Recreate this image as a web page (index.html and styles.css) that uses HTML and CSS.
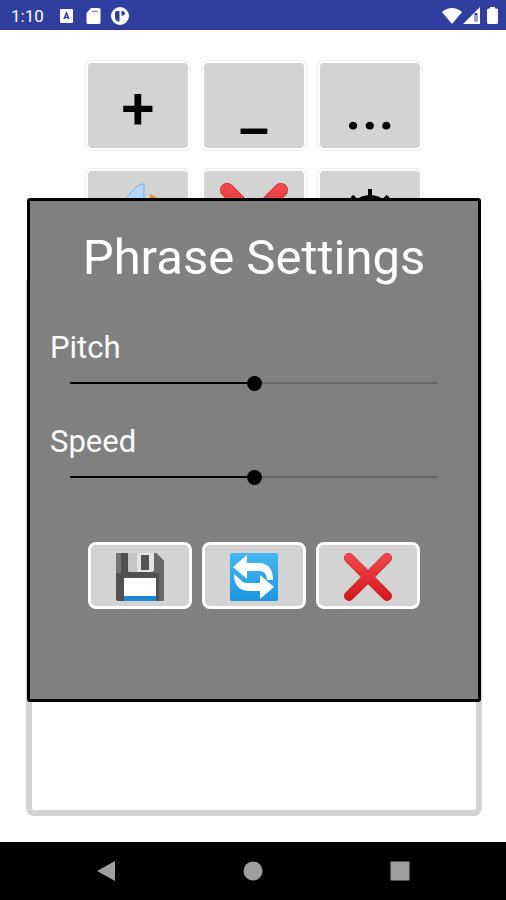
FILE: index.html
```
<!DOCTYPE html>
<html lang="en">

<head>
  <meta charset="UTF-8">
  <meta name="viewport" content="width=device-width, initial-scale=1.0">
  <title>Phrase Settings</title>
  <link rel="stylesheet" href="styles.css">
</head>

<body>
  <!-- shared symbols -->
  <svg class="defs" width="0" height="0">
    <linearGradient id="red" x1="0" y1="0" x2="0" y2="48" gradientUnits="userSpaceOnUse">
      <stop offset="0" stop-color="#f44b4f" />
      <stop offset="1" stop-color="#d3141c" />
    </linearGradient>
    <symbol id="cross" viewBox="0 0 48 48">
      <path d="M5 5L43 43M43 5L5 43" fill="none" stroke="#c4262b" stroke-width="10" stroke-linecap="round" />
      <path d="M5 5L43 43M43 5L5 43" fill="none" stroke="url(#red)" stroke-width="9" stroke-linecap="round" />
    </symbol>
  </svg>

  <header class="status-bar">
    <span class="clock">1:10</span>
    <svg class="icon-a" width="13" height="14" viewBox="0 0 13 14">
      <rect width="13" height="14" rx="1" fill="#fff" />
      <path d="M4 10L6.500 4L9 10M5 8.500H8" fill="none" stroke="#303f9f" stroke-width="1.500" />
    </svg>
    <svg class="icon-sd" width="15" height="16" viewBox="0 0 15 16">
      <path d="M5 0H13Q14.500 0 14.500 1.500V14.500Q14.500 16 13 16H2Q.500 16 .500 14.500V5Z" fill="#fff" />
      <path d="M6 3.500H12" stroke="#8d96cc" stroke-width="1.500" />
    </svg>
    <svg class="icon-p" width="18" height="18" viewBox="0 0 18 18">
      <circle cx="9" cy="9" r="9" fill="#fff" />
      <path d="M4 6Q4 4 6 4H8.500V14.500H7Q4 13.500 4 10ZM10.500 4H12Q14 4.500 14 6.500Q14 8.500 12 8.500H10.500Z" fill="#303f9f" />
    </svg>
    <svg class="icon-wifi" width="20" height="16" viewBox="0 0 20 16">
      <path d="M0 4Q10-4 20 4L10 16Z" fill="#fff" />
    </svg>
    <svg class="icon-signal" width="17" height="17" viewBox="0 0 17 17">
      <path d="M17 0V17H0Z" fill="#fff" />
      <path d="M13 6V14.500" stroke="#303f9f" stroke-width="3" />
      <path d="M13 8V14" stroke="#fff" stroke-width="1" />
    </svg>
    <svg class="icon-battery" width="11" height="17" viewBox="0 0 11 17">
      <path d="M3 0H8V1.500H9.500Q11 1.500 11 3V15.500Q11 17 9.500 17H1.500Q0 17 0 15.500V3Q0 1.500 1.500 1.500H3Z" fill="#fff" />
    </svg>
  </header>

  <main class="board">
    <div class="keys">
      <button class="key">+</button>
      <button class="key">_</button>
      <button class="key">...</button>
      <button class="key" aria-label="Edit">
        <svg width="68" height="68" viewBox="0 0 68 68">
          <path d="M40 1V34H6L21 16L32 4Q36 0 40 1Z" fill="#b3d7f7" stroke="#7fb2e4" />
          <path d="M46 11L54 15L66 34H46Z" fill="#e0962b" />
        </svg>
      </button>
      <button class="key" aria-label="Delete">
        <svg width="68" height="68"><use href="#cross" /></svg>
      </button>
      <button class="key" aria-label="Settings">
        <svg width="56" height="56" viewBox="0 0 56 56">
          <circle cx="28" cy="28" r="17" fill="none" stroke="#000" stroke-width="10" />
          <path d="M28 0V56M0 28H56M10 7L46 49M46 7L10 49" stroke="#000" stroke-width="4" />
        </svg>
      </button>
    </div>
    <textarea class="phrase" aria-label="Phrase"></textarea>
  </main>

  <nav class="nav-bar">
    <button class="nav-item" aria-label="Back">
      <svg width="20" height="22" viewBox="0 0 20 22"><path d="M1 11L19 1V21Z" fill="#9e9e9e" /></svg>
    </button>
    <button class="nav-item" aria-label="Home">
      <svg width="20" height="20" viewBox="0 0 20 20"><circle cx="10" cy="10" r="9.500" fill="#9e9e9e" /></svg>
    </button>
    <button class="nav-item" aria-label="Recent">
      <svg width="20" height="20" viewBox="0 0 20 20"><rect x=".500" y=".500" width="19" height="19" rx="1" fill="#9e9e9e" /></svg>
    </button>
  </nav>

  <div class="overlay">
    <div class="modal" role="dialog" aria-labelledby="modal-title">
      <h2 class="modal-title" id="modal-title">Phrase Settings</h2>
      <div class="field">
        <label for="pitch">Pitch</label>
        <input type="range" id="pitch" min="0" max="100" value="50">
      </div>
      <div class="field">
        <label for="speed">Speed</label>
        <input type="range" id="speed" min="0" max="100" value="50">
      </div>
      <div class="actions">
        <button class="action" aria-label="Save">
          <svg width="48" height="48" viewBox="0 0 48 48">
            <path d="M2 0H40L48 8V46Q48 48 46 48H2Q0 48 0 46V2Q0 0 2 0Z" fill="#505050" />
            <path d="M2 0H5V20H0V2Q0 0 2 0Z" fill="#747474" />
            <path d="M38 0H40L48 8V46Q48 48 46 48H43V20L38 20Z" fill="#686868" />
            <path d="M12 0H38V17Q38 19 36 19H14Q12 19 12 17Z" fill="#e3e3e3" />
            <path d="M12 0H21V19H14Q12 19 12 17Z" fill="#c6c6c6" />
            <rect x="25" y="2" width="8" height="15" fill="#555" />
            <path d="M8 25H40V43H8Z" fill="#fff" />
            <path d="M8 43H40V48H8Z" fill="#1e88d2" />
          </svg>
        </button>
        <button class="action" aria-label="Reset">
          <svg width="48" height="48" viewBox="0 0 48 48">
            <linearGradient id="blue" x1="0" y1="0" x2="0" y2="1">
              <stop offset="0" stop-color="#45b8f5" />
              <stop offset="1" stop-color="#1d96e0" />
            </linearGradient>
            <rect width="48" height="48" rx="2" fill="url(#blue)" />
            <path d="M3 14L17 2V10H30Q43 11 43 27H37Q37 18 29 18H17V26Z" fill="#fff" />
            <path d="M44 34L30 46V38H18Q4 37 4 21L11 27Q12 30 18 30H30V22Z" fill="#fff" />
          </svg>
        </button>
        <button class="action" aria-label="Close">
          <svg width="48" height="48"><use href="#cross" /></svg>
        </button>
      </div>
    </div>
  </div>
</body>

</html>
```
FILE: styles.css
```
* {
  box-sizing: border-box;
}

body {
  margin: 0;
  min-height: 100vh;
  display: flex;
  flex-direction: column;
  background: #fff;
  font-family: Roboto, sans-serif;
}

button {
  display: flex;
  align-items: center;
  justify-content: center;
  padding: 0;
  font-family: inherit;
  cursor: pointer;
}

svg {
  display: block;
  flex: none;
}

.defs {
  position: absolute;
}

/* status bar */
.status-bar {
  display: flex;
  align-items: center;
  height: 30px;
  padding: 1px 8px 0 11px;
  background: #303f9f;
  color: #fff;
}

.clock {
  font-size: 17px;
  line-height: 20px;
}

.icon-a {
  margin-left: 16px;
}

.icon-sd {
  margin-left: 13px;
}

.icon-p {
  margin-left: 10px;
}

.icon-wifi {
  margin-left: auto;
}

.icon-signal {
  margin-left: 1px;
}

.icon-battery {
  margin-left: 7px;
}

/* board */
.board {
  flex: 1;
  display: flex;
  flex-direction: column;
  padding: 31px 24px 26px 26px;
}

.keys {
  display: grid;
  grid-template-columns: repeat(3, 104px);
  grid-auto-rows: 89px;
  justify-content: center;
  gap: 19px 12px;
}

.key {
  padding-top: 6px;
  border: 2px solid #fff;
  border-radius: 6px;
  box-shadow: 0 0 0 1px #eee;
  background: #d3d3d3;
  color: #000;
  font-size: 60px;
  font-weight: 500;
  line-height: 70px;
  overflow: hidden;
}

.phrase {
  flex: 1;
  width: 100%;
  margin-top: 17px;
  padding: 8px;
  border: 6px solid #d3d3d3;
  border-radius: 8px;
  background: #fff;
  font: 30px Roboto, sans-serif;
  resize: none;
  outline: none;
}

/* bottom navigation */
.nav-bar {
  display: grid;
  grid-template-columns: repeat(3, 1fr);
  height: 58px;
  padding: 0 32px;
  background: #000;
}

.nav-item {
  border: 0;
  background: none;
}

/* modal */
.overlay {
  position: fixed;
  inset: 0;
  display: flex;
  align-items: center;
  padding: 0 25px 0 27px;
}

.modal {
  width: 100%;
  padding: 27px 20px 90px;
  border: 3px solid #000;
  border-radius: 3px;
  background: #808080;
  color: #fff;
}

.modal-title {
  margin: 0 0 42px;
  font-size: 49px;
  font-weight: 400;
  line-height: 60px;
  text-align: center;
}

.field {
  display: flex;
  flex-direction: column;
  gap: 5px;
}

.field + .field {
  margin-top: 29px;
}

.field label {
  font-size: 31px;
  line-height: 36px;
}

.field input {
  -webkit-appearance: none;
  appearance: none;
  height: 24px;
  margin: 0 20px;
  background: none;
}

.field input::-webkit-slider-runnable-track {
  height: 2px;
  background: linear-gradient(to right, #000 50%, #666 50%);
}

.field input::-webkit-slider-thumb {
  -webkit-appearance: none;
  width: 15px;
  height: 15px;
  margin-top: -6px;
  border-radius: 50%;
  background: #000;
}

.actions {
  display: flex;
  justify-content: center;
  gap: 10px;
  margin-top: 53px;
}

.action {
  width: 104px;
  height: 67px;
  padding-top: 2px;
  border: 3px solid #fff;
  border-radius: 8px;
  background: #d3d3d3;
}
```
